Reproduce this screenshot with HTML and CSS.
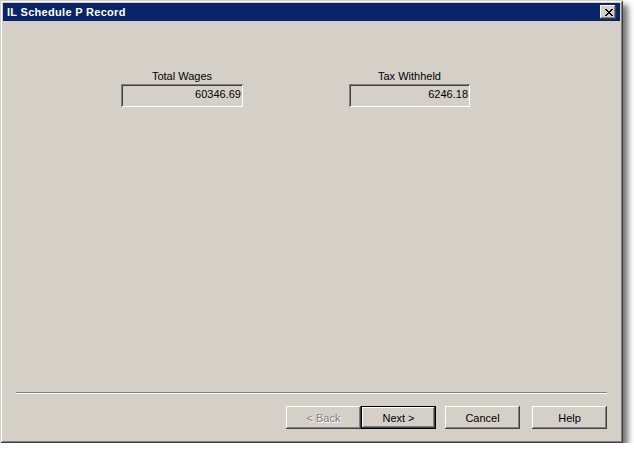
FILE: index.html
```html
<!DOCTYPE html>
<html>
<head>
<meta charset="utf-8">
<title>IL Schedule P Record</title>
<link rel="stylesheet" href="styles.css">
</head>
<body>
<div class="window">
  <div class="titlebar">
    <span class="title">IL Schedule P Record</span>
    <button class="close" type="button" aria-label="Close">
      <svg width="8" height="7" viewBox="0 0 8 7" shape-rendering="crispEdges">
        <path fill="#000" d="M0 0h2v1h-2zM6 0h2v1h-2zM1 1h2v1h-2zM5 1h2v1h-2zM2 2h4v1h-4zM3 3h2v1h-2zM2 4h4v1h-4zM1 5h2v1h-2zM5 5h2v1h-2zM0 6h2v1h-2zM6 6h2v1h-2z"/>
      </svg>
    </button>
  </div>
  <div class="content">
    <div class="fields">
      <div class="field">
        <div class="label">Total Wages</div>
        <div class="box">60346.69</div>
      </div>
      <div class="field field-tax">
        <div class="label">Tax Withheld</div>
        <div class="box">6246.18</div>
      </div>
    </div>
    <div class="footer">
      <div class="separator"></div>
      <div class="buttons">
        <button class="btn disabled" type="button">&lt; Back</button>
        <button class="btn default" type="button">Next &gt;</button>
        <button class="btn cancel" type="button">Cancel</button>
        <button class="btn help" type="button">Help</button>
      </div>
    </div>
  </div>
</div>
</body>
</html>
```
FILE: styles.css
```css
html, body {
  margin: 0;
  padding: 0;
  background: #ffffff;
}

body {
  font-family: "Liberation Sans", Arial, sans-serif;
  font-size: 11px;
  color: #000;
}

/* classic raised window frame with a soft drop shadow */
.window {
  box-sizing: border-box;
  width: 623px;
  height: 443px;
  padding: 3px;
  background: #d4d0c8;
  display: flex;
  flex-direction: column;
  box-shadow:
    inset 1px 1px #d4d0c8,
    inset -1px -1px #404040,
    inset 2px 2px #ffffff,
    inset -2px -2px #808080,
    5px 5px 6px rgba(0, 0, 0, 0.55);
}

.titlebar {
  height: 18px;
  background: #0a246a;
  display: flex;
  align-items: center;
  justify-content: space-between;
  padding: 0 4px 0 4px;
}

.title {
  color: #fff;
  font-weight: bold;
  font-size: 11px;
  letter-spacing: 0.3px;
  line-height: 18px;
}

.close {
  box-sizing: border-box;
  width: 16px;
  height: 14px;
  margin: 0;
  padding: 0 0 0 1px;
  border: none;
  background: #d4d0c8;
  display: flex;
  align-items: center;
  justify-content: center;
  box-shadow:
    inset -1px -1px #404040,
    inset 1px 1px #ffffff,
    inset -2px -2px #808080;
}

.close svg {
  display: block;
}

.content {
  flex: 1;
  display: flex;
  flex-direction: column;
}

.fields {
  display: flex;
  padding-left: 118px;
  margin-top: 48px;
  gap: 106px;
}

.field {
  width: 122px;
  display: flex;
  flex-direction: column;
}

.field-tax {
  width: 121px;
}

.label {
  height: 13px;
  line-height: 15px;
  text-align: center;
  margin-bottom: 2px;
}

/* read-only edit box: sunken two-pixel bevel */
.box {
  box-sizing: border-box;
  height: 23px;
  line-height: 21px;
  text-align: right;
  padding-right: 2px;
  background: #d4d0c8;
  box-shadow:
    inset 1px 1px #808080,
    inset -1px -1px #ffffff,
    inset 2px 2px #404040,
    inset -2px -2px #d4d0c8;
}

.footer {
  margin-top: auto;
  padding: 0 13px 11px 13px;
}

.separator {
  height: 1px;
  background: #808080;
  border-bottom: 1px solid #ffffff;
}

.buttons {
  display: flex;
  justify-content: flex-end;
  margin-top: 12px;
}

.btn {
  box-sizing: border-box;
  width: 75px;
  height: 23px;
  margin: 0;
  padding: 0;
  border: none;
  background: #d4d0c8;
  font-family: "Liberation Sans", Arial, sans-serif;
  font-size: 11px;
  color: #000;
  box-shadow:
    inset -1px -1px #404040,
    inset 1px 1px #ffffff,
    inset -2px -2px #808080;
}

.btn.disabled {
  color: #808080;
  text-shadow: 1px 1px #ffffff;
}

.btn.default {
  box-shadow:
    inset 0 0 0 1px #000000,
    inset -2px -2px #404040,
    inset 2px 2px #ffffff,
    inset -3px -3px #808080;
}

.btn.cancel {
  margin-left: 9px;
}

.btn.help {
  margin-left: 12px;
}
```
